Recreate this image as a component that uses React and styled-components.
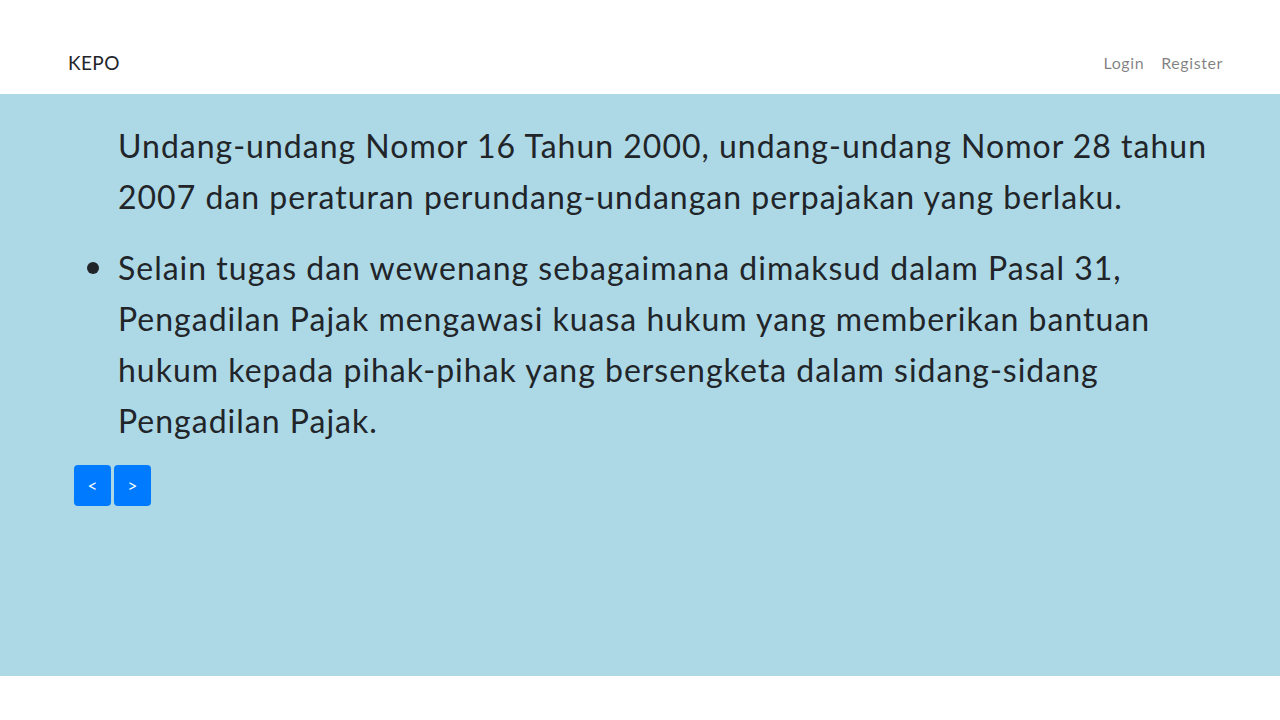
import React from "react";
import styled, { createGlobalStyle } from "styled-components";

const GlobalStyle = createGlobalStyle`
  html, body {
    margin: 0;
    padding: 0;
    background: #fff;
    font-family: Lato, "Open Sans", sans-serif;
    color: #212529;
  }
  * { box-sizing: border-box; }
`;

const Page = styled.div`
  width: 1280px;
  height: 720px;
  display: flex;
  flex-direction: column;
`;

const Navbar = styled.nav`
  height: 94px;
  display: flex;
  align-items: center;
  justify-content: space-between;
  padding: 30px 57px 0 68px;
`;

const Brand = styled.a`
  font-size: 19px;
  letter-spacing: 0.4px;
  color: #212529;
  text-decoration: none;
`;

const NavLinks = styled.div`
  display: flex;
  gap: 17px;
`;

const NavLink = styled.a`
  font-size: 16px;
  letter-spacing: 0.6px;
  color: rgba(0, 0, 0, 0.5);
  text-decoration: none;
`;

const Main = styled.main`
  height: 582px;
  background: #add8e6;
  overflow: hidden;
  padding: 26px 0 0 74px;
`;

const List = styled.ul`
  margin: 0;
  padding-left: 44px;
  font-size: 32px;
  letter-spacing: 1px;
  line-height: 51px;
  color: #212529;
`;

const Item = styled.li`
  list-style: ${(p) => (p.$continued ? "none" : "disc")};
  margin-bottom: 19px;
  &::marker {
    font-size: 36px;
  }
`;

const Buttons = styled.div`
  display: flex;
  gap: 3px;
  margin-top: 1px;
`;

const NavButton = styled.button`
  width: 37px;
  height: 41px;
  border: none;
  border-radius: 4px;
  background: #007bff;
  color: #fff;
  font-family: Lato, sans-serif;
  font-size: 17px;
  cursor: pointer;
`;

export default function App() {
  return (
    <>
      <GlobalStyle />
      <Page>
        <Navbar>
          <Brand href="#">KEPO</Brand>
          <NavLinks>
            <NavLink href="#">Login</NavLink>
            <NavLink href="#">Register</NavLink>
          </NavLinks>
        </Navbar>
        <Main>
          <List>
            <Item $continued>
              Undang-undang Nomor 16 Tahun 2000, undang-undang Nomor 28 tahun
              <br />
              2007 dan peraturan perundang-undangan perpajakan yang berlaku.
            </Item>
            <Item>
              Selain tugas dan wewenang sebagaimana dimaksud dalam Pasal 31,
              <br />
              Pengadilan Pajak mengawasi kuasa hukum yang memberikan bantuan
              <br />
              hukum kepada pihak-pihak yang bersengketa dalam sidang-sidang
              <br />
              Pengadilan Pajak.
            </Item>
          </List>
          <Buttons>
            <NavButton>&lt;</NavButton>
            <NavButton>&gt;</NavButton>
          </Buttons>
        </Main>
      </Page>
    </>
  );
}
